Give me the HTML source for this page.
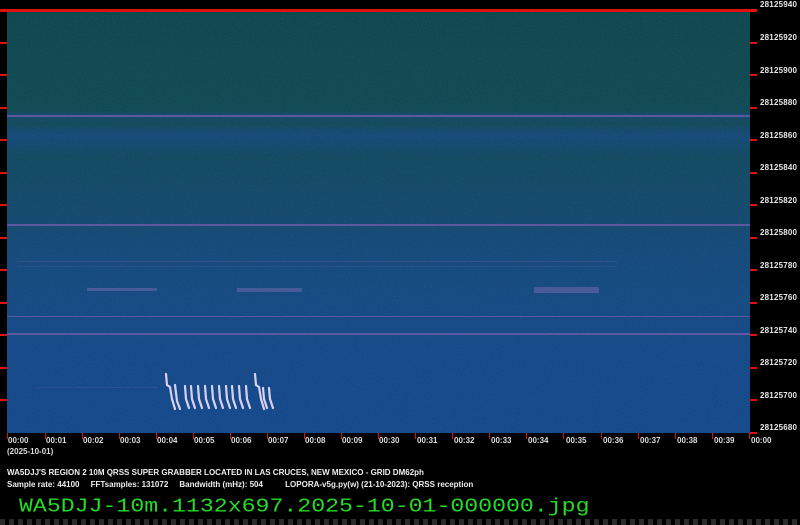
<!DOCTYPE html>
<html><head><meta charset="utf-8"><style>
*{margin:0;padding:0;box-sizing:border-box}
body{width:800px;height:525px;background:#000;position:relative;overflow:hidden;font-family:"Liberation Sans",sans-serif}
.plot{position:absolute;left:7px;top:11px;width:743px;height:422px;
background:linear-gradient(#11484f 0px,#124a55 100px,#154a70 104px,#134a5a 112px,#164a6a 118px,#174a7a 125px,#144a62 145px,#164a6e 200px,#174a7c 240px,#174a84 300px,#17498a 340px,#16498c 422px)}
.hl{position:absolute;left:7px;width:743px;height:2px;background:#6a5aa6;opacity:.85}
.t{position:absolute;background:#e01010}
.rl{position:absolute;left:760px;font-size:8px;font-weight:bold;color:#e8e8e8;letter-spacing:.2px}
.bl{position:absolute;top:436px;font-size:8px;font-weight:bold;color:#dcdcdc}
.ft{position:absolute;left:7px;font-size:8px;font-weight:bold;color:#eee;white-space:pre}
</style></head><body>
<div class="plot"></div>
<svg style="position:absolute;left:7px;top:11px" width="743" height="422">
<filter id="n"><feTurbulence type="fractalNoise" baseFrequency="0.9" numOctaves="1" seed="3"/><feColorMatrix values="0 0 0 0 0.05  0 0 0 0 0.35  0 0 0 0 0.25  0 0 0 1.6 -0.8"/></filter>
<rect width="743" height="422" filter="url(#n)" opacity="0.3"/>
<g fill="#7a6ab0" opacity="0.5">
<rect x="80" y="277" width="70" height="3"/><rect x="230" y="277" width="65" height="4"/>
<rect x="527" y="276" width="65" height="6"/>
<rect x="10" y="250" width="600" height="1" opacity=".5"/><rect x="10" y="255" width="600" height="1" opacity=".4"/>
<rect x="30" y="376" width="120" height="1" opacity=".4"/>
</g>
<g stroke="#e4d8f4" stroke-width="2.2" fill="none" stroke-linecap="round" opacity="0.95">
<path d="M159 363 L160 374 L163 376 L165 388 L168 398"/>
<path d="M168 374 L170 390 L173 398"/>
<path d="M178 375 L179 388 L182 397"/><path d="M184 375 L185 388 L188 397"/>
<path d="M191 375 L192 388 L195 397"/><path d="M198 375 L199 388 L202 397"/>
<path d="M205 375 L206 388 L209 397"/><path d="M212 375 L213 388 L216 397"/>
<path d="M219 375 L220 388 L223 397"/><path d="M225 375 L226 388 L229 397"/>
<path d="M232 375 L233 388 L236 397"/><path d="M239 375 L240 388 L243 397"/>
<path d="M248 363 L249 374 L252 376 L254 388 L257 398"/>
<path d="M256 377 L257 388 L260 397"/><path d="M262 377 L263 388 L266 397"/>
</g>
</svg>
<div class="hl" style="top:115px"></div>
<div class="hl" style="top:224px"></div>
<div class="hl" style="top:316px;height:1px"></div>
<div class="hl" style="top:333px"></div>
<div class="t" style="left:0;top:9px;width:757px;height:3px"></div>
<div class="t" style="left:0;top:42px;width:7px;height:2px"></div>
<div class="t" style="left:0;top:74px;width:7px;height:2px"></div>
<div class="t" style="left:0;top:107px;width:7px;height:2px"></div>
<div class="t" style="left:0;top:139px;width:7px;height:2px"></div>
<div class="t" style="left:0;top:172px;width:7px;height:2px"></div>
<div class="t" style="left:0;top:204px;width:7px;height:2px"></div>
<div class="t" style="left:0;top:237px;width:7px;height:2px"></div>
<div class="t" style="left:0;top:269px;width:7px;height:2px"></div>
<div class="t" style="left:0;top:302px;width:7px;height:2px"></div>
<div class="t" style="left:0;top:334px;width:7px;height:2px"></div>
<div class="t" style="left:0;top:367px;width:7px;height:2px"></div>
<div class="t" style="left:0;top:399px;width:7px;height:2px"></div>
<div class="t" style="left:750px;top:42px;width:7px;height:2px"></div>
<div class="t" style="left:750px;top:74px;width:7px;height:2px"></div>
<div class="t" style="left:750px;top:107px;width:7px;height:2px"></div>
<div class="t" style="left:750px;top:139px;width:7px;height:2px"></div>
<div class="t" style="left:750px;top:172px;width:7px;height:2px"></div>
<div class="t" style="left:750px;top:204px;width:7px;height:2px"></div>
<div class="t" style="left:750px;top:237px;width:7px;height:2px"></div>
<div class="t" style="left:750px;top:269px;width:7px;height:2px"></div>
<div class="t" style="left:750px;top:302px;width:7px;height:2px"></div>
<div class="t" style="left:750px;top:334px;width:7px;height:2px"></div>
<div class="t" style="left:750px;top:367px;width:7px;height:2px"></div>
<div class="t" style="left:750px;top:399px;width:7px;height:2px"></div>
<div class="t" style="left:750px;top:432px;width:7px;height:2px"></div>
<div class="rl" style="top:0px">28125940</div>
<div class="rl" style="top:33px">28125920</div>
<div class="rl" style="top:66px">28125900</div>
<div class="rl" style="top:98px">28125880</div>
<div class="rl" style="top:131px">28125860</div>
<div class="rl" style="top:163px">28125840</div>
<div class="rl" style="top:196px">28125820</div>
<div class="rl" style="top:228px">28125800</div>
<div class="rl" style="top:261px">28125780</div>
<div class="rl" style="top:293px">28125760</div>
<div class="rl" style="top:326px">28125740</div>
<div class="rl" style="top:358px">28125720</div>
<div class="rl" style="top:391px">28125700</div>
<div class="rl" style="top:423px">28125680</div>
<div class="t" style="left:7px;top:433px;width:1px;height:6px"></div>
<div class="t" style="left:45px;top:433px;width:1px;height:6px"></div>
<div class="t" style="left:82px;top:433px;width:1px;height:6px"></div>
<div class="t" style="left:119px;top:433px;width:1px;height:6px"></div>
<div class="t" style="left:156px;top:433px;width:1px;height:6px"></div>
<div class="t" style="left:193px;top:433px;width:1px;height:6px"></div>
<div class="t" style="left:230px;top:433px;width:1px;height:6px"></div>
<div class="t" style="left:267px;top:433px;width:1px;height:6px"></div>
<div class="t" style="left:304px;top:433px;width:1px;height:6px"></div>
<div class="t" style="left:341px;top:433px;width:1px;height:6px"></div>
<div class="t" style="left:378px;top:433px;width:1px;height:6px"></div>
<div class="t" style="left:415px;top:433px;width:1px;height:6px"></div>
<div class="t" style="left:452px;top:433px;width:1px;height:6px"></div>
<div class="t" style="left:489px;top:433px;width:1px;height:6px"></div>
<div class="t" style="left:526px;top:433px;width:1px;height:6px"></div>
<div class="t" style="left:563px;top:433px;width:1px;height:6px"></div>
<div class="t" style="left:601px;top:433px;width:1px;height:6px"></div>
<div class="t" style="left:638px;top:433px;width:1px;height:6px"></div>
<div class="t" style="left:675px;top:433px;width:1px;height:6px"></div>
<div class="t" style="left:712px;top:433px;width:1px;height:6px"></div>
<div class="t" style="left:749px;top:433px;width:1px;height:6px"></div>
<div class="bl" style="left:8px">00:00</div>
<div class="bl" style="left:46px">00:01</div>
<div class="bl" style="left:83px">00:02</div>
<div class="bl" style="left:120px">00:03</div>
<div class="bl" style="left:157px">00:04</div>
<div class="bl" style="left:194px">00:05</div>
<div class="bl" style="left:231px">00:06</div>
<div class="bl" style="left:268px">00:07</div>
<div class="bl" style="left:305px">00:08</div>
<div class="bl" style="left:342px">00:09</div>
<div class="bl" style="left:379px">00:30</div>
<div class="bl" style="left:417px">00:31</div>
<div class="bl" style="left:454px">00:32</div>
<div class="bl" style="left:491px">00:33</div>
<div class="bl" style="left:528px">00:34</div>
<div class="bl" style="left:566px">00:35</div>
<div class="bl" style="left:603px">00:36</div>
<div class="bl" style="left:640px">00:37</div>
<div class="bl" style="left:677px">00:38</div>
<div class="bl" style="left:714px">00:39</div>
<div class="bl" style="left:751px">00:00</div>
<div class="bl" style="left:7px;top:447px">(2025-10-01)</div>
<div class="ft" style="top:468px">WA5DJJ'S REGION 2 10M QRSS SUPER GRABBER LOCATED IN LAS CRUCES, NEW MEXICO - GRID DM62ph</div>
<div class="ft" style="top:480px">Sample rate: 44100     FFTsamples: 131072     Bandwidth (mHz): 504          LOPORA-v5g.py(w) (21-10-2023): QRSS reception</div>
<div style="position:absolute;left:19px;top:496px;font-family:'Liberation Mono',monospace;font-size:23.2px;line-height:24px;color:#22dd22;transform:scaleY(0.85);transform-origin:top left;white-space:pre">WA5DJJ-10m.1132x697.2025-10-01-000000.jpg</div>
<div style="position:absolute;left:0;top:519px;width:800px;height:6px;background:repeating-linear-gradient(90deg,#2a2a2a 0 5px,#000 5px 9px)"></div>
</body></html>
